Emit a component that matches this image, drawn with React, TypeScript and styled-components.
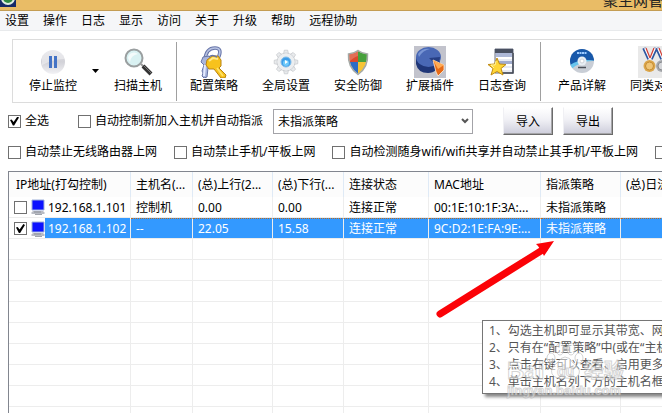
import React from "react";
import styled, { createGlobalStyle, css } from "styled-components";

const Global = createGlobalStyle`
  * { box-sizing: border-box; }
  html, body { margin: 0; background: #fff; }
  body, button, select, input, table {
    font-family: "Noto Sans", "Noto Sans CJK SC", sans-serif;
    font-size: 12px;
    line-height: 16px;
    color: #000;
  }
`;

const Window = styled.div`
  position: relative;
  display: flex;
  flex-direction: column;
  height: 100vh;
  overflow: hidden;
  white-space: nowrap;
`;

const TitleBar = styled.header`
  display: flex;
  flex: none;
  justify-content: space-between;
  align-items: flex-end;
  height: 11px;
  overflow: hidden;
  background: #e9bc66;
  border-bottom: 1px solid #c49d54;
`;

const Logo = styled.svg`
  flex: none;
  width: 16px;
  height: 16px;
  margin-bottom: 3px;
`;

const Title = styled.span`
  font-size: 15px;
  line-height: 20px;
  width: 59px;
  color: #222;
`;

const MenuBar = styled.nav`
  display: flex;
  flex: none;
  gap: 14px;
  height: 20px;
  padding-left: 5px;
  background: #f5f6f8;
  border-bottom: 1px solid #e8eaec;
`;

const MenuItem = styled.button`
  flex: none;
  padding: 1px 0 0;
  border: 0;
  background: none;
`;

const Toolbar = styled.div`
  display: flex;
  flex: none;
  align-items: center;
  height: 64px;
  margin: 8px 0 0 12px;
  padding-left: 4px;
  overflow: hidden;
  border: 1px solid #dcdcdc;
  border-right: 0;
`;

const Tool = styled.button`
  display: flex;
  flex: none;
  flex-direction: column;
  align-items: center;
  width: 72px;
  padding: 0 0 2px;
  border: 0;
  background: none;

  svg {
    width: 32px;
    height: 32px;
  }
`;

const DropButton = styled.button`
  flex: none;
  display: grid;
  place-items: center;
  width: 13px;
  height: 32px;
  padding: 0;
  border: 0;
  background: none;
`;

const Divider = styled.div<{ $after?: number }>`
  flex: none;
  width: 1px;
  height: 59px;
  margin: 0 ${(p) => p.$after ?? 1}px 0 2px;
  background: #a0a0a0;
`;

const Options = styled.div`
  display: flex;
  flex: none;
  align-items: center;
  padding-left: 8px;
`;

const TopOptions = styled(Options)`
  margin-top: 4px;
  height: 28px;
`;

const BottomOptions = styled(Options)`
  margin-top: 8px;
  height: 18px;
  gap: 17px;
`;

const CheckLabel = styled.label<{ $gap?: number }>`
  display: flex;
  flex: none;
  align-items: center;
  gap: 4px;
  margin-right: ${(p) => p.$gap ?? 0}px;
`;

const CheckBox = styled.input.attrs({ type: "checkbox" })`
  appearance: none;
  flex: none;
  display: grid;
  place-items: center;
  width: 13px;
  height: 13px;
  margin: 0;
  border: 1px solid #707070;
  background: #fff;

  &:checked::after {
    content: "";
    width: 9px;
    height: 9px;
    background: #000;
    clip-path: polygon(0 40%, 18% 32%, 40% 62%, 82% 0, 100% 10%, 46% 100%, 32% 100%);
  }
`;

const SelectBox = styled.div`
  display: grid;
  flex: none;
  align-items: center;
  width: 200px;
  margin-right: 30px;

  > * { grid-area: 1 / 1; }
  svg { justify-self: end; margin-right: 4px; pointer-events: none; }
`;

const Select = styled.select`
  appearance: none;
  width: 100%;
  height: 25px;
  padding: 1px 20px 0 4px;
  border: 1px solid #a3a3a8;
  border-radius: 0;
  background: #fff;
`;

const PushButton = styled.button`
  flex: none;
  width: 50px;
  height: 28px;
  margin-right: 10px;
  padding: 1px 0 0;
  border: 1px solid;
  border-color: #fff #6b6b6b #6b6b6b #f0f0f4;
  box-shadow: inset -1px -1px 0 #a5a5a8;
  background: linear-gradient(#ffffff, #f0f0f5 45%, #cdcddb);
`;

const List = styled.main`
  position: relative;
  flex: 1;
  min-height: 0;
  margin: 10px 0 0 8px;
  overflow: hidden;
  border: solid #82868f;
  border-width: 1px 0 0 1px;
`;

const Table = styled.table`
  table-layout: fixed;
  width: 100%;
  min-width: 732px;
  border-collapse: separate;
  border-spacing: 0;
`;

const cell = css`
  padding: 0 0 0 5px;
  overflow: hidden;
  text-align: left;
  font-weight: normal;
`;

const HeadCell = styled.th`
  ${cell}
  height: 25px;
  background: #fcfcfc;
  border-right: 1px solid #dfeaf6;

  &:first-child { padding-left: 7px; }
`;

const Cell = styled.td`
  ${cell}
  height: 21px;
  line-height: 19px;
  border-right: 1px solid #ededed;
  border-bottom: 1px solid #ededed;
`;

const Row = styled.tr<{ $selected?: boolean }>`
  ${(p) =>
    p.$selected &&
    css`
      ${Cell} {
        color: #fff;
        background: #3399ff;
        border-top: 1px dotted #b86a20;
      }
      ${Cell}:first-child {
        background: linear-gradient(to right, #fff 36px, #3399ff 36px);
        border-top-color: transparent;
      }
    `}
`;

const Host = styled.label`
  display: flex;
  align-items: center;
  gap: 3px;

  svg { flex: none; width: 14px; height: 16px; margin-left: 1px; }
`;

const Pointer = styled.svg`
  position: absolute;
  left: 426px;
  top: 66px;
  width: 122px;
  height: 82px;
`;

const Tip = styled.aside`
  position: absolute;
  left: 473px;
  top: 148px;
  padding: 1px 6px 3px;
  line-height: 17px;
  color: #555;
  background: #fff;
  border: 1px solid #767676;
  box-shadow: 3px 3px 3px #888;

  p { margin: 0; }
`;

const Watermark = styled.svg`
  position: absolute;
  left: 497px;
  top: 163px;
  width: 130px;
  height: 68px;
`;

const MenuNames = ["设置", "操作", "日志", "显示", "访问", "关于", "升级", "帮助", "远程协助"];

const PauseIcon = () => (
  <svg viewBox="0 0 32 32">
    <defs>
      <linearGradient id="pz" x1="0" y1="0" x2="0" y2="1">
        <stop offset="0" stopColor="#dcdce2" />
        <stop offset=".5" stopColor="#d2d2d8" />
        <stop offset="1" stopColor="#f2f2f5" />
      </linearGradient>
    </defs>
    <circle cx="16" cy="16" r="12" fill="url(#pz)" />
    <path d="M5 14a11 11 0 0 1 22-1Q16 13 5 19z" fill="#fff" opacity=".4" />
    <path d="M12 10h3v12h-3zM17 10h3v12h-3z" fill="#4473c5" />
  </svg>
);

const SearchIcon = () => (
  <svg viewBox="0 0 32 32">
    <path d="M19 18l4 4" stroke="#999" strokeWidth="2" />
    <path d="M21 20l8 8" stroke="#333" strokeWidth="4" />
    <path d="M22 20l7 7" stroke="#777" strokeWidth="1" />
    <circle cx="12" cy="12" r="8.500" fill="#d9f1f2" stroke="#9a9fa0" strokeWidth="2" />
    <path d="M6 12a6 6 0 0 1 10-4Q9 9 8 16z" fill="#fff" opacity=".7" />
  </svg>
);

const KeysIcon = () => (
  <svg viewBox="0 0 32 32">
    <path d="M7 14Q8 2 17 2q7 0 4 8l-2 4" fill="none" stroke="#6674a8" strokeWidth="3.600" />
    <path d="M7 14Q8 2 17 2q7 0 4 8l-2 4" fill="none" stroke="#b7c2e2" strokeWidth="1.600" />
    <path d="M5 11l6-1 3 4-1 6-3 2-1 9-3 1-2-2 1-3-1-2 2-6-3-3z" fill="#a9b5dc" stroke="#6876a8" />
    <path d="M7 19l-1 11" stroke="#e5ebff" strokeWidth="2" />
    <path d="M9 14l5-4 6 0 3 4 0 6-2 2 7 7-1 3-4 0-7-9-5 0-3-4z" fill="#f7c21c" stroke="#b98412" />
    <path d="M11 15l4-3 5 1" fill="none" stroke="#ffe98c" strokeWidth="2" />
    <path d="M19 22l6 8" stroke="#ffe36b" strokeWidth="1.500" />
    <path d="M11 11q3-3 8 0" fill="none" stroke="#6674a8" strokeWidth="1.500" />
  </svg>
);

const GearIcon = () => (
  <svg viewBox="0 0 32 32">
    <g fill="#e9ebed" stroke="#c3c6ca" strokeWidth=".7">
      {[0, 45, 90, 135, 180, 225, 270, 315].map((a) => (
        <path key={a} d="M13.500 8l.8-3.800h3.400l.8 3.800z" transform={`rotate(${a} 16 16)`} />
      ))}
      <circle cx="16" cy="16" r="9" />
    </g>
    <circle cx="16" cy="16" r="8.500" fill="#eceef0" />
    <circle cx="16" cy="16" r="5" fill="#3e9de8" stroke="#82bde9" />
    <circle cx="16" cy="17" r="3" fill="#6fcbfb" />
    <path d="M15 14l3 2-3 2z" fill="#fff" />
  </svg>
);

const ShieldIcon = () => (
  <svg viewBox="0 0 32 32">
    <clipPath id="sh">
      <path d="M16 5q4 3 9 3 1 13-9 20Q6 21 7 8q5 0 9-3z" />
    </clipPath>
    <g clipPath="url(#sh)">
      <path d="M5 3h11v13H5z" fill="#dc4a2c" />
      <path d="M16 3h11v13H16z" fill="#47a03c" />
      <path d="M5 16h11v13H5z" fill="#2d6cc4" />
      <path d="M16 16h11v13H16z" fill="#f6c435" />
      <path d="M7 8q5 0 9-3v5q-4 1-9 6z" fill="#fff" opacity=".2" />
    </g>
    <path d="M16 4.500q4 3 9.500 3.500 1 13-9.500 20.500Q5.500 21 6.500 8q5.500-.5 9.500-3.500z" fill="none" stroke="#a4a9a5" strokeWidth="1.500" />
  </svg>
);

const PieIcon = () => (
  <svg viewBox="0 0 32 32">
    <path d="M0 0h32v32H0z" fill="#c2c3cc" />
    <path d="M2 11v7q2 9 12 9 5 0 8-3l4-7v-6z" fill="#1f3678" />
    <ellipse cx="14.500" cy="11" rx="12.500" ry="10" fill="#4968b5" />
    <path d="M4 8q4-6 12-5-7 1-11 8z" fill="#7895d4" />
    <path d="M15 12l11-1q0 5-4 8z" fill="#273f84" />
    <path d="M19 14l11 5v5l-6 6-2-4z" fill="#e66a17" stroke="#fff0dc" strokeWidth=".8" />
    <path d="M19 14l11 5-6 4z" fill="#ffab55" />
  </svg>
);

const LogIcon = () => (
  <svg viewBox="0 0 32 32">
    <path d="M9 3h18v24H9z" fill="#e7eaf3" stroke="#696f80" />
    <path d="M9 3h18v4H9z" fill="#495061" />
    <path d="M10 7h16v5H10z" fill="#adb8d7" />
    <path d="M10 12h16M10 19h16M10 23h16" stroke="#fff" strokeWidth="2" />
    <path d="M10 15h16v3H10z" fill="#a2adcf" />
    <path d="M27 7v20H15" fill="none" stroke="#444955" strokeWidth="1.500" />
    <path d="M11 12l2.500 6 6.500.5-5 4 2 6.500-6-3.500L5 29l2-6.500-5-4 6.500-.5z" fill="#ffd637" stroke="#c08b13" />
    <path d="M10 15l-1 4-4 0 3 3" fill="none" stroke="#fff2a0" />
  </svg>
);

const DiscIcon = () => (
  <svg viewBox="0 0 32 32">
    <clipPath id="dc"><circle cx="16" cy="15" r="12" /></clipPath>
    <circle cx="16" cy="15" r="12" fill="#c9ced6" />
    <g clipPath="url(#dc)">
      <path d="M3 2h26v13q-13-3-26 6z" fill="#1858aa" />
      <path d="M4 19q11-7 25-4-14-1-25 9z" fill="#68c4ed" />
    </g>
    <path d="M11 7h10" stroke="#9ccaff" strokeWidth="2" strokeDasharray="2 .500" />
    <circle cx="16" cy="15" r="4.500" fill="#e8eef4" />
    <circle cx="16" cy="15" r="2" fill="#fff" stroke="#c4c9d0" strokeWidth=".8" />
    <path d="M12 21.500h8" stroke="#4c5059" strokeWidth="1.500" />
  </svg>
);

const MedalIcon = () => (
  <svg viewBox="0 0 32 32">
    <path d="M0 0h32v32H0z" fill="#e9e9e9" />
    <path d="M6 2l5 11M18 2l-5 11M19 2l5 11M31 2l-5 11" stroke="#2c55a0" strokeWidth="3.600" />
    <path d="M7 2l5 11M17 2l-5 11M20 2l5 11M30 2l-5 11" stroke="#fff" strokeWidth="2" />
    <path d="M8 2l4 10M16 2l-4 10M21 2l4 10M29 2l-4 10" stroke="#d23d34" strokeWidth="1.200" />
    <circle cx="11.500" cy="20" r="6" fill="#dba64b" />
    <circle cx="11.500" cy="20" r="4" fill="#efc577" stroke="#c58b31" />
    <circle cx="24" cy="20" r="6" fill="#a6a8ac" />
    <circle cx="24" cy="20" r="4" fill="#d6d7da" stroke="#8a8c90" />
  </svg>
);

const MonitorIcon = () => (
  <svg viewBox="0 0 14 16">
    <path d="M1 1h12v10H1z" fill="#0d12ff" stroke="#9fb0d8" />
    <path d="M2 12h10l1.500 1.500v1.500H.5v-1.500z" fill="#b9bcc4" />
    <path d="M3 13h7" stroke="#8a8e98" />
    <path d="M4 15.500h7" stroke="#a0a4ac" />
  </svg>
);

const tools = [
  { name: "配置策略", Icon: KeysIcon },
  { name: "全局设置", Icon: GearIcon },
  { name: "安全防御", Icon: ShieldIcon },
  { name: "扩展插件", Icon: PieIcon },
  { name: "日志查询", Icon: LogIcon },
];

const helpTools = [
  { name: "产品详解", Icon: DiscIcon },
  { name: "同类对比", Icon: MedalIcon },
];

const columns = [
  { name: "IP地址(打勾控制)", width: 122 },
  { name: "主机名(...", width: 62 },
  { name: "(总)上行(2...", width: 80 },
  { name: "(总)下行(...", width: 71 },
  { name: "连接状态", width: 85 },
  { name: "MAC地址", width: 112 },
  { name: "指派策略", width: 80 },
  { name: "(总)日流量", width: 120 },
];

const hosts = [
  { ip: "192.168.1.101", on: false, values: ["控制机", "0.00", "0.00", "连接正常", "00:1E:10:1F:3A:...", "未指派策略", ""] },
  { ip: "192.168.1.102", on: true, values: ["--", "22.05", "15.58", "连接正常", "9C:D2:1E:FA:9E:...", "未指派策略", ""] },
];

const emptyRows = Array.from({ length: 9 }, (_, i) => i);

export default function App() {
  return (
    <Window>
      <Global />
      <TitleBar>
        <Logo viewBox="0 0 16 16">
          <path d="M0 0h16v16H0z" fill="#172a68" />
          <circle cx="8" cy="7" r="7" fill="#dfeee1" />
          <circle cx="8" cy="7" r="5" fill="#2f8a40" />
          <path d="M5 7l3-3 2 2z" fill="#8fd092" />
        </Logo>
        <Title>聚生网管</Title>
      </TitleBar>
      <MenuBar>
        {MenuNames.map((name) => (
          <MenuItem key={name}>{name}</MenuItem>
        ))}
      </MenuBar>
      <Toolbar>
        <Tool><PauseIcon />停止监控</Tool>
        <DropButton aria-label="更多监控操作">
          <svg width="7" height="4" viewBox="0 0 7 4"><path d="M0 0h7L3.500 4z" /></svg>
        </DropButton>
        <Tool><SearchIcon />扫描主机</Tool>
        <Divider />
        {tools.map(({ name, Icon }) => (
          <Tool key={name}><Icon />{name}</Tool>
        ))}
        <Divider $after={5} />
        {helpTools.map(({ name, Icon }) => (
          <Tool key={name}><Icon />{name}</Tool>
        ))}
      </Toolbar>
      <TopOptions>
        <CheckLabel $gap={29}><CheckBox defaultChecked />全选</CheckLabel>
        <CheckLabel $gap={10}><CheckBox />自动控制新加入主机并自动指派</CheckLabel>
        <SelectBox>
          <Select aria-label="指派策略"><option>未指派策略</option></Select>
          <svg width="8" height="6" viewBox="0 0 8 6">
            <path d="M1 1l3 3 3-3" fill="none" stroke="#555" strokeWidth="2" />
          </svg>
        </SelectBox>
        <PushButton>导入</PushButton>
        <PushButton>导出</PushButton>
      </TopOptions>
      <BottomOptions>
        <CheckLabel><CheckBox />自动禁止无线路由器上网</CheckLabel>
        <CheckLabel><CheckBox />自动禁止手机/平板上网</CheckLabel>
        <CheckLabel><CheckBox />自动检测随身wifi/wifi共享并自动禁止其手机/平板上网</CheckLabel>
        <CheckBox aria-label="其他选项" />
      </BottomOptions>
      <List>
        <Table>
          <colgroup>
            {columns.map((c) => <col key={c.name} width={c.width} />)}
          </colgroup>
          <thead>
            <tr>{columns.map((c) => <HeadCell key={c.name}>{c.name}</HeadCell>)}</tr>
          </thead>
          <tbody>
            {hosts.map((h) => (
              <Row key={h.ip} $selected={h.on}>
                <Cell>
                  <Host><CheckBox defaultChecked={h.on} /><MonitorIcon />{h.ip}</Host>
                </Cell>
                {h.values.map((v, i) => <Cell key={i}>{v}</Cell>)}
              </Row>
            ))}
            {emptyRows.map((r) => (
              <Row key={r}>{columns.map((c) => <Cell key={c.name} />)}</Row>
            ))}
          </tbody>
        </Table>
        <Pointer viewBox="0 0 122 82">
          <path d="M5 76L109 11" stroke="#fb0207" strokeWidth="7" strokeLinecap="round" />
          <path d="M119 3L109 18 107 14 103 8 101 6z" fill="#fb0207" />
        </Pointer>
        <Tip role="tooltip">
          <p>1、勾选主机即可显示其带宽、网速</p>
          <p>2、只有在“配置策略”中(或在“主机</p>
          <p>3、点击右键可以查看、启用更多功能</p>
          <p>4、单击主机名列下方的主机名框</p>
        </Tip>
        <Watermark viewBox="0 0 130 68" aria-hidden="true">
          <g fill="#fff" fillOpacity=".5" stroke="#aaa" strokeOpacity=".5" strokeWidth="1" fontFamily="Liberation Sans, Noto Sans CJK SC, sans-serif" fontWeight="bold">
            <text x="1" y="44" fontSize="24">Bai</text>
            <text x="78" y="43" fontSize="20">经验</text>
            <text x="1" y="60" fontSize="13">jingyan.baidu.com</text>
            <ellipse cx="45" cy="23" rx="4" ry="5" />
            <ellipse cx="54" cy="14" rx="4" ry="6" />
            <ellipse cx="65" cy="14" rx="4" ry="6" />
            <ellipse cx="73" cy="23" rx="4" ry="5" />
            <path d="M59 22q5 0 8 6 8 5 6 11-3 6-13 4-10 2-14-4-2-6 5-11 4-6 8-6z" />
            <text x="51" y="41" fontSize="14">du</text>
          </g>
        </Watermark>
      </List>
    </Window>
  );
}
